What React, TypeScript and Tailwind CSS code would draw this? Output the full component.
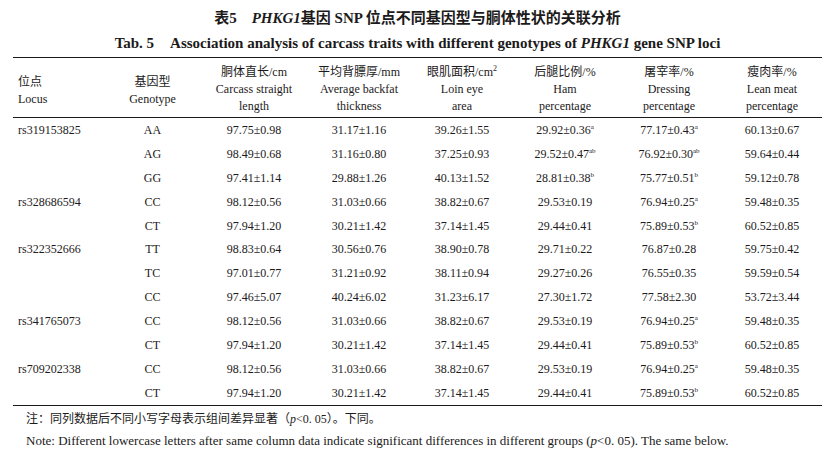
import React from "react";

type Cell = { v: string; s?: string };
type Row = { locus: string; g: string; c: Cell[] };

const rows: Row[] = [
  { locus: "rs319153825", g: "AA", c: [{ v: "97.75±0.98" }, { v: "31.17±1.16" }, { v: "39.26±1.55" }, { v: "29.92±0.36", s: "a" }, { v: "77.17±0.43", s: "a" }, { v: "60.13±0.67" }] },
  { locus: "", g: "AG", c: [{ v: "98.49±0.68" }, { v: "31.16±0.80" }, { v: "37.25±0.93" }, { v: "29.52±0.47", s: "ab" }, { v: "76.92±0.30", s: "ab" }, { v: "59.64±0.44" }] },
  { locus: "", g: "GG", c: [{ v: "97.41±1.14" }, { v: "29.88±1.26" }, { v: "40.13±1.52" }, { v: "28.81±0.38", s: "b" }, { v: "75.77±0.51", s: "b" }, { v: "59.12±0.78" }] },
  { locus: "rs328686594", g: "CC", c: [{ v: "98.12±0.56" }, { v: "31.03±0.66" }, { v: "38.82±0.67" }, { v: "29.53±0.19" }, { v: "76.94±0.25", s: "a" }, { v: "59.48±0.35" }] },
  { locus: "", g: "CT", c: [{ v: "97.94±1.20" }, { v: "30.21±1.42" }, { v: "37.14±1.45" }, { v: "29.44±0.41" }, { v: "75.89±0.53", s: "b" }, { v: "60.52±0.85" }] },
  { locus: "rs322352666", g: "TT", c: [{ v: "98.83±0.64" }, { v: "30.56±0.76" }, { v: "38.90±0.78" }, { v: "29.71±0.22" }, { v: "76.87±0.28" }, { v: "59.75±0.42" }] },
  { locus: "", g: "TC", c: [{ v: "97.01±0.77" }, { v: "31.21±0.92" }, { v: "38.11±0.94" }, { v: "29.27±0.26" }, { v: "76.55±0.35" }, { v: "59.59±0.54" }] },
  { locus: "", g: "CC", c: [{ v: "97.46±5.07" }, { v: "40.24±6.02" }, { v: "31.23±6.17" }, { v: "27.30±1.72" }, { v: "77.58±2.30" }, { v: "53.72±3.44" }] },
  { locus: "rs341765073", g: "CC", c: [{ v: "98.12±0.56" }, { v: "31.03±0.66" }, { v: "38.82±0.67" }, { v: "29.53±0.19" }, { v: "76.94±0.25", s: "a" }, { v: "59.48±0.35" }] },
  { locus: "", g: "CT", c: [{ v: "97.94±1.20" }, { v: "30.21±1.42" }, { v: "37.14±1.45" }, { v: "29.44±0.41" }, { v: "75.89±0.53", s: "b" }, { v: "60.52±0.85" }] },
  { locus: "rs709202338", g: "CC", c: [{ v: "98.12±0.56" }, { v: "31.03±0.66" }, { v: "38.82±0.67" }, { v: "29.53±0.19" }, { v: "76.94±0.25", s: "a" }, { v: "59.48±0.35" }] },
  { locus: "", g: "CT", c: [{ v: "97.94±1.20" }, { v: "30.21±1.42" }, { v: "37.14±1.45" }, { v: "29.44±0.41" }, { v: "75.89±0.53", s: "b" }, { v: "60.52±0.85" }] },
];

const headers: { zh: React.ReactNode; en1: string; en2: string }[] = [
  { zh: "胴体直长/cm", en1: "Carcass straight", en2: "length" },
  { zh: "平均背膘厚/mm", en1: "Average backfat", en2: "thickness" },
  { zh: <>眼肌面积/cm<sup className="text-[8px] relative -top-[5px]">2</sup></>, en1: "Loin eye", en2: "area" },
  { zh: "后腿比例/%", en1: "Ham", en2: "percentage" },
  { zh: "屠宰率/%", en1: "Dressing", en2: "percentage" },
  { zh: "瘦肉率/%", en1: "Lean meat", en2: "percentage" },
];

const grid = "grid grid-cols-[92px_95px_108px_102px_104px_102px_106px_100px]";

export default function App() {
  return (
    <div
      className="w-[835px] h-[459px] bg-white text-[#1c1a1a] overflow-hidden"
      style={{ fontFamily: '"Liberation Serif", "Noto Sans CJK SC", serif' }}
    >
      <div className="pt-[8px] flex flex-col items-center">
        <div className="h-[20px] leading-[20px] text-[15px] font-bold flex items-center whitespace-pre">
          <span>表5</span>
          <span className="ml-[15px] italic">PHKG1</span>
          <span>基因 SNP 位点不同基因型与胴体性状的关联分析</span>
        </div>
        <div className="h-[20px] leading-[20px] mt-[5px] text-[15px] font-bold whitespace-pre">
          <span>Tab. 5</span>
          <span className="ml-[16px]">Association analysis of carcass traits with different genotypes of </span>
          <span className="italic">PHKG1</span>
          <span> gene SNP loci</span>
        </div>
      </div>

      <div className="mx-[13px] mt-[4px] w-[809px]">
        <div className="border-t-[1.5px] border-[#1c1a1a]" />
        <div className={`${grid} h-[60px] pt-[4px] text-[12px] leading-[17px] border-b-[1.5px] border-[#1c1a1a]`}>
          <div className="flex flex-col justify-center pl-[5px] pt-[2px]">
            <span>位点</span>
            <span>Locus</span>
          </div>
          <div className="flex flex-col justify-center items-center pt-[2px]">
            <span>基因型</span>
            <span>Genotype</span>
          </div>
          {headers.map((h, i) => (
            <div key={i} className="flex flex-col justify-center items-center">
              <span className="whitespace-nowrap">{h.zh}</span>
              <span className="whitespace-nowrap">{h.en1}</span>
              <span className="whitespace-nowrap">{h.en2}</span>
            </div>
          ))}
        </div>
        <div className="border-b-[1.5px] border-[#1c1a1a]">
          {rows.map((r, i) => (
            <div key={i} className={`${grid} h-[23.9px] items-center text-[12px]`}>
              <div className="pl-[5px]">{r.locus}</div>
              <div className="text-center">{r.g}</div>
              {r.c.map((c, j) => (
                <div key={j} className="text-center whitespace-nowrap">
                  {c.v}
                  {c.s && <sup className="text-[7px] relative -top-[5px]">{c.s}</sup>}
                </div>
              ))}
            </div>
          ))}
        </div>
      </div>

      <div className="pl-[26px] pt-[3px] text-[12px]">
        <div className="h-[21px] leading-[21px] whitespace-nowrap">
          注：同列数据后不同小写字母表示组间差异显著（<span className="italic">p</span>&lt;0. 05）。下同。
        </div>
        <div className="h-[21px] leading-[21px] whitespace-nowrap text-[13px]">
          Note: Different lowercase letters after same column data indicate significant differences in different groups (<span className="italic">p</span>&lt;0. 05). The same below.
        </div>
      </div>
    </div>
  );
}
